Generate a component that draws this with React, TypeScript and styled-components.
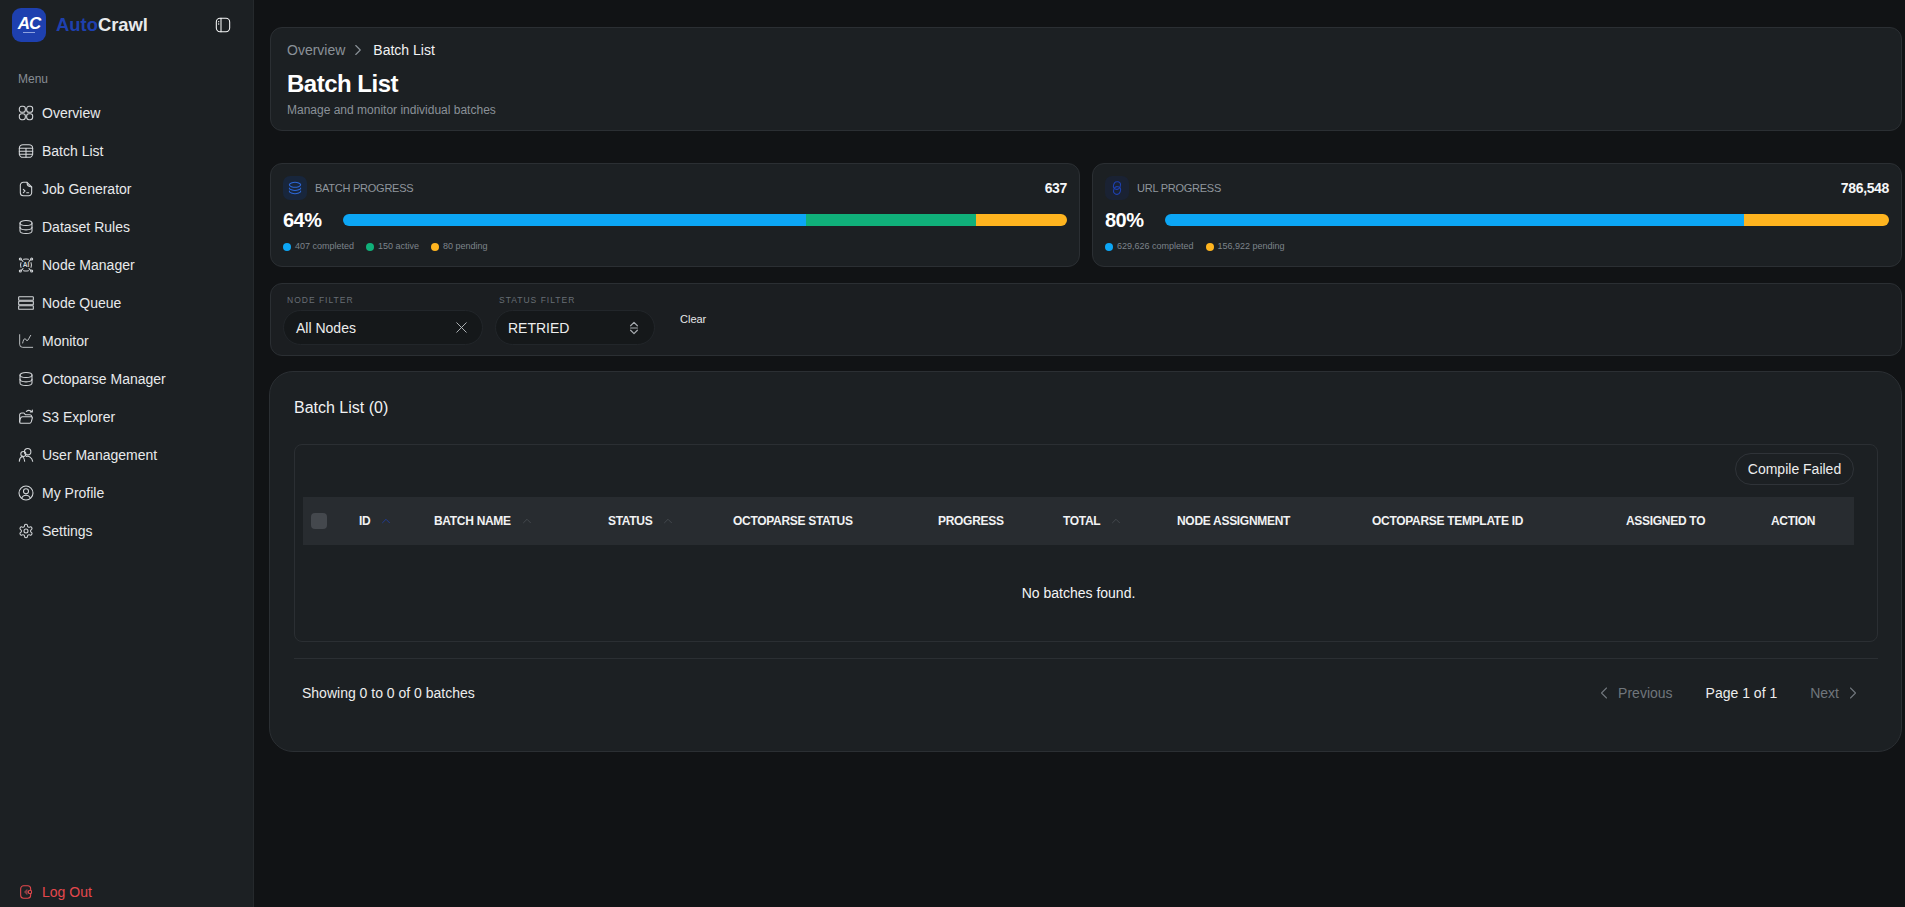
import React from 'react';
import styled, { createGlobalStyle } from 'styled-components';
import { ChevronLeft, ChevronRight, ChevronUp, X } from 'lucide-react';

const GlobalStyle = createGlobalStyle`
  html, body {
    margin: 0;
    padding: 0;
    background: #111315;
  }
  body {
    font-family: 'Liberation Sans', Arial, sans-serif;
    color: #f4f5f6;
  }
  * {
    box-sizing: border-box;
  }
`;

const Shell = styled.div`
  display: flex;
  height: 907px;
  overflow: hidden;
`;

const Sidebar = styled.aside`
  display: flex;
  flex-direction: column;
  flex: 0 0 254px;
  background: #1c2023;
  border-right: 1px solid #25292c;
  padding: 8px 0 0;
`;

const BrandRow = styled.div`
  display: flex;
  align-items: center;
  height: 34px;
  padding: 0 22px 0 12px;
`;

const LogoMark = styled.div`
  display: flex;
  flex-direction: column;
  align-items: center;
  justify-content: center;
  width: 34px;
  height: 34px;
  border-radius: 9px;
  background: #1e40af;
  color: #fff;
  font-size: 17px;
  line-height: 14px;
  font-weight: 700;
  font-style: italic;
  letter-spacing: -1px;

  &::after {
    content: '';
    display: block;
    width: 12px;
    height: 1px;
    margin-top: 1px;
    background: #8ea2e0;
  }
`;

const BrandName = styled.div`
  margin-left: 10px;
  font-size: 18.4px;
  font-weight: 700;
  color: #e8eaec;
  flex: 1;
`;

const BrandAccent = styled.span`
  color: #1e40af;
`;

const MenuLabel = styled.div`
  margin: 30px 0 0 18px;
  height: 14px;
  font-size: 12px;
  line-height: 14px;
  color: #878d94;
`;

const NavList = styled.nav`
  display: flex;
  flex-direction: column;
  margin-top: 8px;
  flex: 1;
`;

const NavItem = styled.a<{ $danger?: boolean }>`
  display: flex;
  align-items: center;
  gap: 8px;
  height: 38px;
  padding-left: 18px;
  font-size: 14px;
  color: ${(p) => (p.$danger ? '#e5484d' : '#e8eaec')};

  svg {
    color: ${(p) => (p.$danger ? '#e5484d' : '#d3d6d9')};
  }
`;

const LogoutSlot = styled.div`
  margin-bottom: -4px;
`;

const Main = styled.main`
  flex: 1;
  min-width: 0;
  display: flex;
  flex-direction: column;
  padding: 27px 3px 0 16px;
`;

const Card = styled.section`
  background: #1c2023;
  border: 1px solid #2b2f33;
  border-radius: 12px;
`;

const HeaderCard = styled(Card)`
  height: 104px;
  padding: 13px 16px 0 16px;
`;

const Crumbs = styled.div`
  display: flex;
  align-items: center;
  height: 18px;
  font-size: 14px;
  color: #8a9198;
`;

const CrumbIcon = styled(ChevronRight)`
  margin: 0 6px 0 4px;
  color: #8a9198;
`;

const CrumbCurrent = styled.span`
  color: #f1f2f3;
`;

const PageTitle = styled.h1`
  margin: 10px 0 0;
  font-size: 24px;
  line-height: 30px;
  font-weight: 700;
  letter-spacing: -0.5px;
  color: #fff;
`;

const PageSubtitle = styled.p`
  margin: 4px 0 0;
  font-size: 12px;
  line-height: 14px;
  color: #8a9198;
`;

const StatGrid = styled.div`
  display: grid;
  grid-template-columns: 1fr 1fr;
  gap: 12px;
  margin-top: 32px;
`;

const StatCard = styled(Card)`
  height: 104px;
  padding: 12px 12px 0;
`;

const StatHead = styled.div`
  display: flex;
  align-items: center;
  height: 24px;
`;

const StatIconBox = styled.div<{ $tint: string }>`
  display: flex;
  align-items: center;
  justify-content: center;
  width: 24px;
  height: 24px;
  border-radius: 7px;
  background: ${(p) => p.$tint};
`;

const StatTitle = styled.div`
  flex: 1;
  margin-left: 8px;
  font-size: 11px;
  letter-spacing: -0.25px;
  color: #8f969d;
`;

const StatTotal = styled.div`
  font-size: 14px;
  font-weight: 700;
  letter-spacing: -0.35px;
  color: #f5f6f7;
`;

const StatBarRow = styled.div`
  display: flex;
  align-items: center;
  margin-top: 8px;
  height: 24px;
`;

const StatPercent = styled.div`
  flex: 0 0 60px;
  font-size: 20px;
  font-weight: 700;
  letter-spacing: -0.5px;
  color: #fff;
`;

const StatBar = styled.div`
  display: flex;
  flex: 1;
  height: 12px;
  border-radius: 6px;
  overflow: hidden;
`;

const StatSegment = styled.div<{ $color: string }>`
  background: ${(p) => p.$color};
`;

const LegendRow = styled.div`
  display: flex;
  gap: 12px;
  margin-top: 8px;
`;

const LegendItem = styled.div`
  display: flex;
  align-items: center;
  gap: 4px;
  font-size: 9px;
  line-height: 12px;
  color: #7d848b;
`;

const LegendDot = styled.span<{ $color: string }>`
  width: 8px;
  height: 8px;
  border-radius: 50%;
  margin-top: 1px;
  background: ${(p) => p.$color};
`;

const FilterCard = styled(Card)`
  display: flex;
  align-items: flex-start;
  gap: 12px;
  height: 73px;
  margin-top: 16px;
  padding: 11px 12px 0;
  background: #1b1e21;
`;

const FilterField = styled.div<{ $width: number }>`
  display: flex;
  flex-direction: column;
  width: ${(p) => p.$width}px;
`;

const FilterLabel = styled.label`
  height: 15px;
  padding-left: 4px;
  font-size: 8.5px;
  line-height: 10px;
  letter-spacing: 1px;
  color: #686e75;
`;

const FilterControl = styled.div`
  display: flex;
  align-items: center;
  justify-content: space-between;
  height: 35px;
  padding: 0 11px 0 12px;
  border: 1px solid #22262a;
  border-radius: 18px;
  background: #15181a;
  font-size: 14px;
  color: #eceded;
`;

const ClearButton = styled.button`
  margin: 18px 0 0 13px;
  padding: 0;
  border: 0;
  background: none;
  font: inherit;
  font-size: 11px;
  color: #e4e6e8;
`;

const TableCard = styled(Card)`
  height: 381px;
  margin-top: 15px;
  margin-left: -1px;
  padding: 0 23px 0 24px;
  border-radius: 24px;
`;

const TableTitle = styled.h2`
  margin: 0;
  padding-top: 26px;
  height: 72px;
  font-size: 16px;
  line-height: 19px;
  font-weight: 400;
  color: #f1f2f3;
`;

const TableFrame = styled.div`
  height: 198px;
  padding: 8px 23px 0 8px;
  border: 1px solid #2b2f33;
  border-radius: 8px;
`;

const TableToolbar = styled.div`
  display: flex;
  justify-content: flex-end;
  margin-bottom: 12px;
`;

const PillButton = styled.button`
  height: 32px;
  width: 119px;
  padding: 0;
  border: 1px solid #2f3338;
  border-radius: 16px;
  background: none;
  font: inherit;
  font-size: 14px;
  color: #eceded;
`;

const DataTable = styled.table`
  width: 100%;
  table-layout: fixed;
  border-collapse: collapse;
`;

const HeadRow = styled.tr`
  height: 48px;
  background: #282c30;
`;

const HeadCell = styled.th<{ $width: number }>`
  width: ${(p) => p.$width}px;
  padding: 0;
  text-align: left;
  font-size: 12px;
  font-weight: 700;
  letter-spacing: -0.3px;
  white-space: nowrap;
  color: #f1f2f3;
`;

const SortIcon = styled(ChevronUp)<{ $active?: boolean }>`
  margin-left: 9px;
  vertical-align: -3px;
  color: ${(p) => (p.$active ? '#1e40af' : '#4b5056')};
`;

const CheckBox = styled.span`
  display: block;
  width: 16px;
  height: 16px;
  margin-left: 8px;
  border-radius: 4px;
  background: #44484d;
`;

const EmptyCell = styled.td`
  height: 96px;
  text-align: center;
  font-size: 14px;
  color: #f4f5f6;
`;

const Pager = styled.footer`
  display: flex;
  align-items: center;
  height: 69px;
  margin-top: 16px;
  padding: 0 15px 0 8px;
  border-top: 1px solid #2b2f33;
  font-size: 14px;
  color: #eceded;
`;

const PagerSummary = styled.div`
  flex: 1;
`;

const PagerControl = styled.div`
  display: flex;
  align-items: center;
  gap: 4px;
  color: #70767c;
`;

const PagerPage = styled.div`
  margin: 0 33px;
`;

const Svg = styled.svg`
  flex: 0 0 auto;
`;

function Icon({ children, size = 16, color = 'currentColor' }: { children: React.ReactNode; size?: number; color?: string }) {
  return (
    <Svg width={size} height={size} viewBox="0 0 24 24" fill="none" stroke={color} strokeWidth={1.6} strokeLinecap="round" strokeLinejoin="round">
      {children}
    </Svg>
  );
}

const OverviewIcon = () => (
  <Icon>
    <rect x="2" y="2" width="9" height="9" rx="3.5" />
    <rect x="13" y="2" width="9" height="9" rx="3.5" />
    <rect x="2" y="13" width="9" height="9" rx="3.5" />
    <rect x="13" y="13" width="9" height="9" rx="3.5" />
  </Icon>
);

const TableIcon = () => (
  <Icon>
    <rect x="2" y="2.5" width="20" height="19" rx="5.5" />
    <path d="M2 8h20M2 12.500h20M2 17h20M12 8v13.500" />
  </Icon>
);

const FileScriptIcon = () => (
  <Icon>
    <path d="M3.500 6.500a4.500 4.500 0 0 1 4.500-4.500h5.500L20.500 9v8.500A4.500 4.500 0 0 1 16 22H8a4.500 4.500 0 0 1-4.500-4.500z" />
    <path d="M13.500 2c0 4.500 1.500 7 7 7" />
    <path d="M8 12.500l2.500 2.500L8 17.500M13 17.500h3" />
  </Icon>
);

const DatabaseIcon = () => (
  <Icon>
    <path d="M3 6c0-2.200 4-3.800 9-3.800s9 1.600 9 3.800v12c0 2.200-4 3.800-9 3.800s-9-1.600-9-3.800z" />
    <path d="M3 6c0 2.200 4 3.800 9 3.800s9-1.600 9-3.800" />
    <path d="M3 12.500c0 2.200 4 3.800 9 3.800s9-1.600 9-3.800" />
  </Icon>
);

const NetworkIcon = () => (
  <Icon>
    <path d="M4.500 8.500C3.500 11 3.500 13 4.500 15.500M19.500 8.500c1 2.500 1 4.500 0 7M8.500 3.500c2.500-.7 4.500-.7 7 0M8.500 20.500c2.500.7 4.500.7 7 0" />
    <path d="M5 4l2.500 2.500M19 4l-2.500 2.500M5 20l2.500-2.500M19 20l-2.500-2.500" />
    <circle cx="3.500" cy="3" r="1.500" />
    <circle cx="20.500" cy="3" r="1.500" />
    <circle cx="3.500" cy="21" r="1.500" />
    <circle cx="20.500" cy="21" r="1.500" />
    <text x="12" y="15.500" textAnchor="middle" fontSize="10" fontWeight="700" fontFamily="Liberation Sans, sans-serif" fill="currentColor" stroke="none">
      AI
    </text>
  </Icon>
);

const QueueIcon = () => (
  <Icon>
    <rect x="1" y="2.500" width="22" height="5.500" rx="1" />
    <rect x="1" y="9.250" width="22" height="5.500" rx="1" />
    <rect x="1" y="16" width="22" height="5.500" rx="1" />
  </Icon>
);

const ChartIcon = () => (
  <Icon>
    <path d="M2.500 2.500V17a4.500 4.500 0 0 0 4.500 4.500h15" strokeWidth={1.300} />
    <path d="M7 15c.8-4 2-6.500 3.500-6.500 1.500 0 1.500 3 3 3 2 0 3-4.500 5.500-8" strokeWidth={1.300} />
  </Icon>
);

const FolderIcon = () => (
  <Icon>
    <path d="M2.500 19V9a3 3 0 0 1 3-3h3.500l2 2.500h6.500a3 3 0 0 1 3 3" />
    <path d="M2.500 19c.3-3 1.200-5.500 2-6.500.5-.6 1.200-1 2-1h13.500c1.200 0 1.800 1 1.500 2l-1.500 5.500c-.4 1.300-1.300 2.500-2.500 2.500H4.500c-1.200 0-2-1.300-2-2.500z" />
    <path d="M12.500 3.500c2.500-1.800 6-1.500 8.500.7M21.500 1.500v3h-3" />
  </Icon>
);

const UsersIcon = () => (
  <Icon>
    <circle cx="14.500" cy="7" r="4.800" />
    <path d="M2 21.500c0-3 1.500-6 4.500-7.500" />
    <circle cx="8" cy="10.500" r="3.800" />
    <path d="M10 21.500c0-3-1.200-5.800-3.500-7.500M12.500 14.200c4.500-1 8.500 2 9.500 7.300" />
  </Icon>
);

const ProfileIcon = () => (
  <Icon>
    <circle cx="12" cy="12" r="10.500" />
    <circle cx="12" cy="9.500" r="3.800" />
    <path d="M5.500 19.500c1.500-2.800 3.800-4 6.500-4s5 1.200 6.500 4" />
  </Icon>
);

const GearIcon = () => (
  <Icon>
    <path d="M12.220 2h-.44a2 2 0 0 0-2 2v.18a2 2 0 0 1-1 1.730l-.43.25a2 2 0 0 1-2 0l-.15-.08a2 2 0 0 0-2.730.73l-.22.380a2 2 0 0 0 .730 2.730l.15.100a2 2 0 0 1 1 1.720v.510a2 2 0 0 1-1 1.740l-.15.090a2 2 0 0 0-.730 2.730l.22.380a2 2 0 0 0 2.730.730l.15-.080a2 2 0 0 1 2 0l.43.250a2 2 0 0 1 1 1.730V20a2 2 0 0 0 2 2h.44a2 2 0 0 0 2-2v-.18a2 2 0 0 1 1-1.730l.43-.250a2 2 0 0 1 2 0l.15.080a2 2 0 0 0 2.730-.730l.22-.390a2 2 0 0 0-.730-2.730l-.15-.080a2 2 0 0 1-1-1.740v-.500a2 2 0 0 1 1-1.740l.15-.090a2 2 0 0 0 .730-2.730l-.22-.380a2 2 0 0 0-2.730-.730l-.15.080a2 2 0 0 1-2 0l-.43-.250a2 2 0 0 1-1-1.730V4a2 2 0 0 0-2-2z" />
    <circle cx="12" cy="12" r="3" />
  </Icon>
);

const LogoutIcon = () => (
  <Icon>
    <rect x="4" y="2.500" width="15" height="19" rx="4.500" />
    <path d="M20 12h-9" stroke="#8a4046" strokeWidth={2.200} />
    <path d="M13.500 9L10.500 12l3 3" stroke="#8a4046" strokeWidth={2.200} />
    <circle cx="18" cy="12" r="2.500" fill="#1c2023" />
  </Icon>
);

const PanelIcon = () => (
  <Icon size={16}>
    <rect x="2" y="2" width="20" height="20" rx="5.500" />
    <path d="M9 2v20" />
    <path d="M5.500 7h.01M5.500 10.500h.01" strokeWidth={2} />
  </Icon>
);

const StackIcon = () => (
  <Icon size={16} color="#2d68d8">
    <path d="M12 3.500c3.200 0 8.500 1.600 8.500 3.800S15.200 11 12 11 3.500 9.500 3.500 7.300 8.800 3.500 12 3.500z" />
    <path d="M3.500 12.200c0 2.100 5.300 3.600 8.500 3.600s8.500-1.500 8.500-3.600" />
    <path d="M3.500 16.700c0 2.200 5.300 3.800 8.500 3.800s8.500-1.600 8.500-3.800" />
  </Icon>
);

const LinkIcon = () => (
  <Icon size={16} color="#1e40af">
    <rect x="7" y="2.500" width="10" height="11.500" rx="5" transform="rotate(18 12 8)" />
    <rect x="7" y="10" width="10" height="11.500" rx="5" transform="rotate(18 12 16)" />
  </Icon>
);

const UpDownIcon = () => (
  <Icon size={18} color="#a7abb0">
    <path d="M7.500 9L12 4.500 16.500 9M7.500 15l4.500 4.500 4.500-4.500M7.500 12h9" />
  </Icon>
);

const NAV_ITEMS = [
  { label: 'Overview', icon: <OverviewIcon /> },
  { label: 'Batch List', icon: <TableIcon /> },
  { label: 'Job Generator', icon: <FileScriptIcon /> },
  { label: 'Dataset Rules', icon: <DatabaseIcon /> },
  { label: 'Node Manager', icon: <NetworkIcon /> },
  { label: 'Node Queue', icon: <QueueIcon /> },
  { label: 'Monitor', icon: <ChartIcon /> },
  { label: 'Octoparse Manager', icon: <DatabaseIcon /> },
  { label: 'S3 Explorer', icon: <FolderIcon /> },
  { label: 'User Management', icon: <UsersIcon /> },
  { label: 'My Profile', icon: <ProfileIcon /> },
  { label: 'Settings', icon: <GearIcon /> },
];

const BLUE = '#0ca6f5';
const GREEN = '#10b07a';
const AMBER = '#feb41f';

const COLUMNS = [
  { label: 'ID', width: 75, sort: 'active' },
  { label: 'BATCH NAME', width: 174, sort: 'idle' },
  { label: 'STATUS', width: 125, sort: 'idle' },
  { label: 'OCTOPARSE STATUS', width: 205 },
  { label: 'PROGRESS', width: 125 },
  { label: 'TOTAL', width: 114, sort: 'idle' },
  { label: 'NODE ASSIGNMENT', width: 195 },
  { label: 'OCTOPARSE TEMPLATE ID', width: 254 },
  { label: 'ASSIGNED TO', width: 145 },
  { label: 'ACTION', width: 83 },
];

function Stat({ icon, tint, title, total, percent, segments }: {
  icon: React.ReactNode;
  tint: string;
  title: string;
  total: string;
  percent: number;
  segments: { color: string; share: number; label: string }[];
}) {
  return (
    <StatCard>
      <StatHead>
        <StatIconBox $tint={tint}>{icon}</StatIconBox>
        <StatTitle>{title}</StatTitle>
        <StatTotal>{total}</StatTotal>
      </StatHead>
      <StatBarRow>
        <StatPercent>{percent}%</StatPercent>
        <StatBar>
          {segments.map((s) => (
            <StatSegment key={s.label} $color={s.color} style={{ width: `${s.share}%` }} />
          ))}
        </StatBar>
      </StatBarRow>
      <LegendRow>
        {segments.map((s) => (
          <LegendItem key={s.label}>
            <LegendDot $color={s.color} />
            {s.label}
          </LegendItem>
        ))}
      </LegendRow>
    </StatCard>
  );
}

export default function App() {
  return (
    <Shell>
      <GlobalStyle />
      <Sidebar>
        <BrandRow>
          <LogoMark>AC</LogoMark>
          <BrandName>
            <BrandAccent>Auto</BrandAccent>Crawl
          </BrandName>
          <PanelIcon />
        </BrandRow>
        <MenuLabel>Menu</MenuLabel>
        <NavList>
          {NAV_ITEMS.map((item) => (
            <NavItem key={item.label}>
              {item.icon}
              {item.label}
            </NavItem>
          ))}
        </NavList>
        <LogoutSlot>
          <NavItem $danger>
            <LogoutIcon />
            Log Out
          </NavItem>
        </LogoutSlot>
      </Sidebar>
      <Main>
        <HeaderCard>
          <Crumbs>
            Overview
            <CrumbIcon size={18} strokeWidth={1.5} />
            <CrumbCurrent>Batch List</CrumbCurrent>
          </Crumbs>
          <PageTitle>Batch List</PageTitle>
          <PageSubtitle>Manage and monitor individual batches</PageSubtitle>
        </HeaderCard>
        <StatGrid>
          <Stat
            icon={<StackIcon />}
            tint="#18263c"
            title="BATCH PROGRESS"
            total="637"
            percent={64}
            segments={[
              { color: BLUE, share: 64, label: '407 completed' },
              { color: GREEN, share: 23.5, label: '150 active' },
              { color: AMBER, share: 12.5, label: '80 pending' },
            ]}
          />
          <Stat
            icon={<LinkIcon />}
            tint="#1a2233"
            title="URL PROGRESS"
            total="786,548"
            percent={80}
            segments={[
              { color: BLUE, share: 80, label: '629,626 completed' },
              { color: AMBER, share: 20, label: '156,922 pending' },
            ]}
          />
        </StatGrid>
        <FilterCard>
          <FilterField $width={200}>
            <FilterLabel>NODE FILTER</FilterLabel>
            <FilterControl>
              All Nodes
              <X size={19} strokeWidth={1.2} color="#b4b8bc" />
            </FilterControl>
          </FilterField>
          <FilterField $width={160}>
            <FilterLabel>STATUS FILTER</FilterLabel>
            <FilterControl>
              RETRIED
              <UpDownIcon />
            </FilterControl>
          </FilterField>
          <ClearButton>Clear</ClearButton>
        </FilterCard>
        <TableCard>
          <TableTitle>Batch List (0)</TableTitle>
          <TableFrame>
            <TableToolbar>
              <PillButton>Compile Failed</PillButton>
            </TableToolbar>
            <DataTable>
              <thead>
                <HeadRow>
                  <HeadCell $width={56}>
                    <CheckBox />
                  </HeadCell>
                  {COLUMNS.map((col) => (
                    <HeadCell key={col.label} $width={col.width}>
                      {col.label}
                      {col.sort && <SortIcon size={14} strokeWidth={1.3} $active={col.sort === 'active'} />}
                    </HeadCell>
                  ))}
                </HeadRow>
              </thead>
              <tbody>
                <tr>
                  <EmptyCell colSpan={11}>No batches found.</EmptyCell>
                </tr>
              </tbody>
            </DataTable>
          </TableFrame>
          <Pager>
            <PagerSummary>Showing 0 to 0 of 0 batches</PagerSummary>
            <PagerControl>
              <ChevronLeft size={20} strokeWidth={1.3} />
              Previous
            </PagerControl>
            <PagerPage>Page 1 of 1</PagerPage>
            <PagerControl>
              Next
              <ChevronRight size={20} strokeWidth={1.3} />
            </PagerControl>
          </Pager>
        </TableCard>
      </Main>
    </Shell>
  );
}
